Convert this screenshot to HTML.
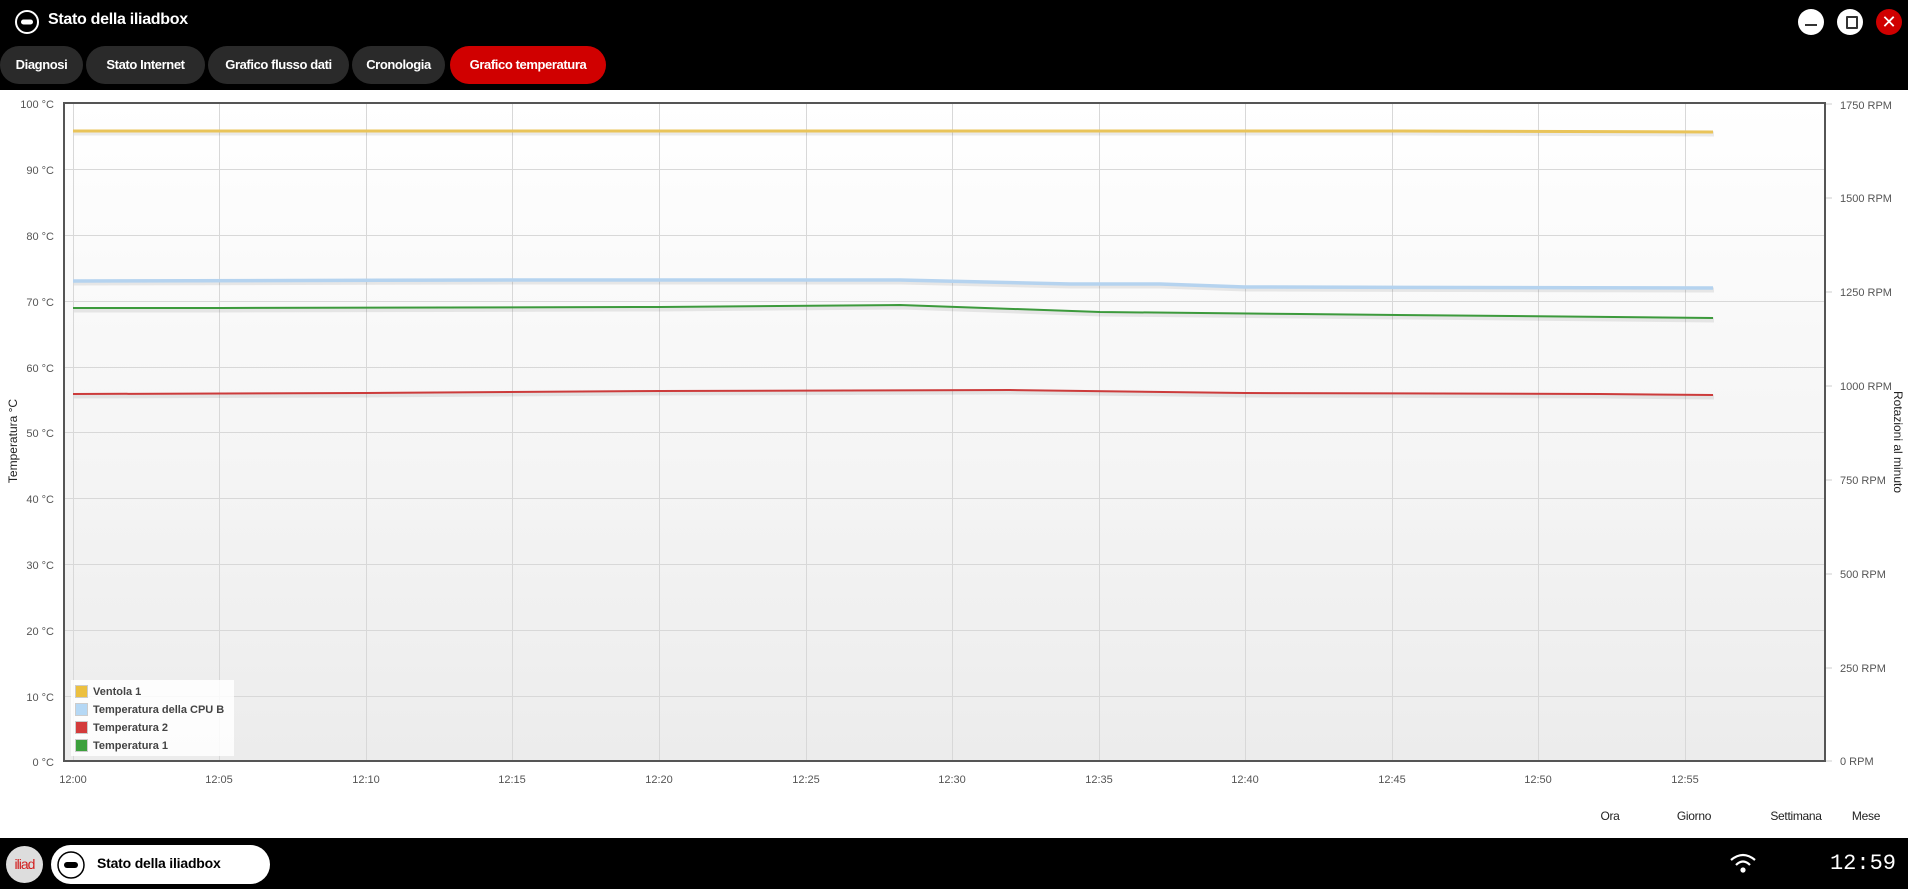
<!DOCTYPE html>
<html><head><meta charset="utf-8"><style>
html,body{margin:0;padding:0;width:1908px;height:889px;overflow:hidden;background:#fff;font-family:"Liberation Sans",sans-serif}
.hdr{position:absolute;left:0;top:0;width:1908px;height:90px;background:#000}
.title{position:absolute;left:48px;top:10px;color:#fff;font-weight:bold;font-size:16px;line-height:20px;letter-spacing:-0.3px}
.tab{position:absolute;top:46px;height:38px;border-radius:19px;background:#2a2a2a;color:#fff;font-weight:bold;font-size:13px;line-height:38px;text-align:center;letter-spacing:-0.4px}
.tab.on{background:#d00000}
.wb{position:absolute;top:9px;width:26px;height:26px;border-radius:13px;background:#fff}
.bot{position:absolute;left:0;top:838px;width:1908px;height:51px;background:#000}
.per{position:absolute;top:809px;font-size:12px;color:#222;transform:translateX(-50%);letter-spacing:-0.3px}
</style></head><body>
<div class="hdr">
<svg style="position:absolute;left:14px;top:9px" width="26" height="26"><circle cx="13" cy="13" r="11" fill="none" stroke="#fff" stroke-width="2"/><rect x="7" y="10.5" width="12" height="5" rx="2.5" fill="#fff"/></svg>
<div class="title">Stato della iliadbox</div>
<div class="tab" style="left:0;width:83px">Diagnosi</div>
<div class="tab" style="left:86px;width:119px">Stato Internet</div>
<div class="tab" style="left:208px;width:141px">Grafico flusso dati</div>
<div class="tab" style="left:352px;width:93px">Cronologia</div>
<div class="tab on" style="left:450px;width:156px">Grafico temperatura</div>
<div class="wb" style="left:1798px"><div style="position:absolute;left:7px;top:15px;width:12px;height:2px;background:#333"></div></div>
<div class="wb" style="left:1837px"><div style="position:absolute;left:9px;top:7px;width:8px;height:9px;border:2px solid #333;border-radius:1px"></div></div>
<div class="wb" style="left:1876px;background:#d00000;color:#fff;font-size:18px;line-height:26px;text-align:center">✕</div>
</div>

<svg style="position:absolute;left:0;top:90px" width="1908" height="748" viewBox="0 90 1908 748">
<defs><linearGradient id="g" x1="0" y1="0" x2="0" y2="1"><stop offset="0" stop-color="#ffffff"/><stop offset="1" stop-color="#ececec"/></linearGradient></defs>
<rect x="64" y="103" width="1761" height="658" fill="url(#g)"/>
<g stroke="#d8d8d8" stroke-width="1">
<line x1="64" x2="1825" y1="169.5" y2="169.5"/><line x1="64" x2="1825" y1="235.5" y2="235.5"/><line x1="64" x2="1825" y1="301.5" y2="301.5"/><line x1="64" x2="1825" y1="367.5" y2="367.5"/><line x1="64" x2="1825" y1="432.5" y2="432.5"/><line x1="64" x2="1825" y1="498.5" y2="498.5"/><line x1="64" x2="1825" y1="564.5" y2="564.5"/><line x1="64" x2="1825" y1="630.5" y2="630.5"/><line x1="64" x2="1825" y1="696.5" y2="696.5"/>
<line y1="103" y2="761" x1="73.5" x2="73.5"/><line y1="103" y2="761" x1="219.5" x2="219.5"/><line y1="103" y2="761" x1="366.5" x2="366.5"/><line y1="103" y2="761" x1="512.5" x2="512.5"/><line y1="103" y2="761" x1="659.5" x2="659.5"/><line y1="103" y2="761" x1="806.5" x2="806.5"/><line y1="103" y2="761" x1="952.5" x2="952.5"/><line y1="103" y2="761" x1="1099.5" x2="1099.5"/><line y1="103" y2="761" x1="1245.5" x2="1245.5"/><line y1="103" y2="761" x1="1392.5" x2="1392.5"/><line y1="103" y2="761" x1="1538.5" x2="1538.5"/><line y1="103" y2="761" x1="1685.5" x2="1685.5"/>
</g>
<g stroke="#ccc" stroke-width="1"><line x1="1825" x2="1832" y1="104" y2="104"/><line x1="1825" x2="1832" y1="198" y2="198"/><line x1="1825" x2="1832" y1="292" y2="292"/><line x1="1825" x2="1832" y1="386" y2="386"/><line x1="1825" x2="1832" y1="480" y2="480"/><line x1="1825" x2="1832" y1="574" y2="574"/><line x1="1825" x2="1832" y1="668" y2="668"/><line x1="1825" x2="1832" y1="761" y2="761"/></g>
<rect x="64" y="103" width="1761" height="658" fill="none" stroke="#555" stroke-width="2"/>
<g fill="none" stroke-linejoin="round">
<g stroke="#000" stroke-opacity="0.08" stroke-width="5" transform="translate(1,2)">
<polyline points="73,131 500,131 1000,131 1400,131 1713,132"/>
<polyline points="73,281 513,280 900,280 1070,284 1160,284 1245,287 1713,288"/>
<polyline points="73,308 220,308 660,307 900,305 1100,312 1300,314 1713,318"/>
<polyline points="73,394 366,393 660,391 1010,390 1245,393 1600,394 1713,395"/>
</g>
<polyline stroke="#e9c45a" stroke-width="3" points="73,131 500,131 1000,131 1400,131 1713,132"/>
<polyline stroke="#b5d3ef" stroke-width="3.5" points="73,281 513,280 900,280 1070,284 1160,284 1245,287 1713,288"/>
<polyline stroke="#3c9a3c" stroke-width="2" points="73,308 220,308 660,307 900,305 1100,312 1300,314 1713,318"/>
<polyline stroke="#cc3b3b" stroke-width="2" points="73,394 366,393 660,391 1010,390 1245,393 1600,394 1713,395"/>
</g>
<g font-size="11" fill="#555" text-anchor="end">
<text x="54" y="108">100 °C</text><text x="54" y="174">90 °C</text><text x="54" y="240">80 °C</text><text x="54" y="306">70 °C</text><text x="54" y="372">60 °C</text><text x="54" y="437">50 °C</text><text x="54" y="503">40 °C</text><text x="54" y="569">30 °C</text><text x="54" y="635">20 °C</text><text x="54" y="701">10 °C</text><text x="54" y="766">0 °C</text>
</g>
<g font-size="11" fill="#555">
<text x="1840" y="109">1750 RPM</text><text x="1840" y="202">1500 RPM</text><text x="1840" y="296">1250 RPM</text><text x="1840" y="390">1000 RPM</text><text x="1840" y="484">750 RPM</text><text x="1840" y="578">500 RPM</text><text x="1840" y="672">250 RPM</text><text x="1840" y="765">0 RPM</text>
</g>
<g font-size="11" fill="#555" text-anchor="middle">
<text x="73" y="783">12:00</text><text x="219" y="783">12:05</text><text x="366" y="783">12:10</text><text x="512" y="783">12:15</text><text x="659" y="783">12:20</text><text x="806" y="783">12:25</text><text x="952" y="783">12:30</text><text x="1099" y="783">12:35</text><text x="1245" y="783">12:40</text><text x="1392" y="783">12:45</text><text x="1538" y="783">12:50</text><text x="1685" y="783">12:55</text>
</g>
<text transform="translate(17,441) rotate(-90)" font-size="12" fill="#222" text-anchor="middle">Temperatura °C</text>
<text transform="translate(1894,442) rotate(90)" font-size="12" fill="#222" text-anchor="middle">Rotazioni al minuto</text>
<rect x="71" y="680" width="163" height="76" fill="#fff" fill-opacity="0.85"/>
<g stroke="#ccc" stroke-width="1">
<rect x="75.5" y="685.5" width="12" height="12" fill="#ecc040"/>
<rect x="75.5" y="703.5" width="12" height="12" fill="#b5d8f5"/>
<rect x="75.5" y="721.5" width="12" height="12" fill="#d33b3b"/>
<rect x="75.5" y="739.5" width="12" height="12" fill="#3ca03c"/>
</g>
<g font-size="11" font-weight="bold" fill="#444">
<text x="93" y="695">Ventola 1</text><text x="93" y="713">Temperatura della CPU B</text><text x="93" y="731">Temperatura 2</text><text x="93" y="749">Temperatura 1</text>
</g>
</svg>

<div class="per" style="left:1610px">Ora</div>
<div class="per" style="left:1694px">Giorno</div>
<div class="per" style="left:1796px">Settimana</div>
<div class="per" style="left:1866px">Mese</div>

<div class="bot">
<div style="position:absolute;left:6px;top:8px;width:37px;height:37px;border-radius:19px;background:#ddd;color:#d21e1e;font-size:14px;line-height:37px;text-align:center;letter-spacing:-1px">iliad</div>
<div style="position:absolute;left:51px;top:7px;width:219px;height:39px;border-radius:20px;background:#fff"></div>
<svg style="position:absolute;left:56px;top:12px" width="30" height="30"><circle cx="15" cy="15" r="13" fill="none" stroke="#000" stroke-width="1.5"/><rect x="8" y="12" width="14" height="6" rx="3" fill="#000"/></svg>
<div style="position:absolute;left:97px;top:17px;font-weight:bold;font-size:14px;color:#000;letter-spacing:-0.2px">Stato della iliadbox</div>
<svg style="position:absolute;left:1728px;top:14px" width="30" height="22"><path d="M3 8 Q15 -2 27 8" fill="none" stroke="#fff" stroke-width="2.2"/><path d="M8 13 Q15 6 22 13" fill="none" stroke="#fff" stroke-width="2.2"/><circle cx="15" cy="18" r="2.6" fill="#fff"/></svg>
<div style="position:absolute;right:12px;top:13px;color:#fff;font-family:'Liberation Mono',monospace;font-size:22px">12:59</div>
</div>
</body></html>
